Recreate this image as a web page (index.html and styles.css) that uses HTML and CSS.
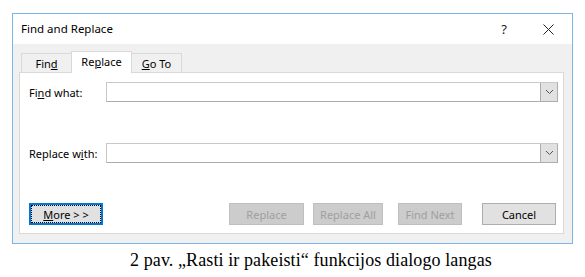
FILE: index.html
```html
<!DOCTYPE html>
<html>
<head>
    <title>Find and Replace</title>
    <link rel="stylesheet" href="styles.css">
</head>
<body>
    <div class="dialog">
        <div class="titlebar">
            <span class="title">Find and Replace</span>
            <span class="help">?</span>
            <svg class="close" width="11" height="11" viewBox="0 0 11 11">
                <path d="M0.5 0.5 L10.5 10.5 M10.5 0.5 L0.5 10.5" stroke="#222" stroke-width="1" fill="none"/>
            </svg>
        </div>

        <div class="dialog_body">
            <div class="tabs">
                <div class="tab tab_find">Fin<u>d</u></div>
                <div class="tab tab_replace active">Re<u>p</u>lace</div>
                <div class="tab tab_goto"><u>G</u>o To</div>
            </div>

            <div class="panel">
                <div class="row">
                    <label class="field_label">Fi<u>n</u>d what:</label>
                    <div class="combo">
                        <div class="combo_text"></div>
                        <div class="combo_button">
                            <svg width="9" height="6" viewBox="0 0 9 6">
                                <path d="M1 1 L4.5 4.5 L8 1" stroke="#555" stroke-width="1" fill="none"/>
                            </svg>
                        </div>
                    </div>
                </div>

                <div class="row row_replace">
                    <label class="field_label">Replace w<u>i</u>th:</label>
                    <div class="combo">
                        <div class="combo_text"></div>
                        <div class="combo_button">
                            <svg width="9" height="6" viewBox="0 0 9 6">
                                <path d="M1 1 L4.5 4.5 L8 1" stroke="#555" stroke-width="1" fill="none"/>
                            </svg>
                        </div>
                    </div>
                </div>

                <div class="buttons">
                    <div class="btn btn_more"><span class="focus_ring"><u>M</u>ore &gt; &gt;</span></div>
                    <div class="spacer"></div>
                    <div class="btn disabled btn_replace">Replace</div>
                    <div class="btn disabled btn_replace_all">Replace All</div>
                    <div class="btn disabled btn_find_next">Find Next</div>
                    <div class="btn btn_cancel">Cancel</div>
                </div>
            </div>
        </div>
    </div>

    <p class="caption">2 pav. „Rasti ir pakeisti“ funkcijos dialogo langas</p>
</body>
</html>
```

FILE: styles.css
```css
body {
    margin: 0;
    padding: 0;
    background-color: #fff;
    font-family: 'Noto Sans', 'Open Sans', sans-serif;
    font-size: 11px;
    color: #000;
}

.dialog {
    width: 559px;
    margin: 13px 0 0 12px;
    border: 1px solid #7eb4ea;
    background-color: #f0f0f0;
}

.titlebar {
    height: 30px;
    background-color: #fff;
    display: flex;
    align-items: center;
    padding-left: 8px;
}

.title {
    font-size: 11.5px;
    flex: 1;
    margin-top: -1px;
}

.help {
    font-size: 13px;
    color: #222;
    width: 40px;
    margin-right: 19px;
    text-align: center;
}

.close {
    margin-right: 18px;
}

.dialog_body {
    padding: 7px 8px 9px 6px;
}

.tabs {
    display: flex;
    align-items: flex-end;
    padding-left: 2px;
    height: 21px;
}

.tab {
    height: 18px;
    border: 1px solid #d9d9d9;
    border-bottom: none;
    background-color: #f0f0f0;
    text-align: center;
    line-height: 19px;
    box-sizing: content-box;
}

.tab_find {
    width: 49px;
}

.tab_replace {
    width: 59px;
    margin-left: -1px;
}

.tab_goto {
    width: 49px;
    margin-left: -1px;
}

.tab.active {
    height: 21px;
    line-height: 20px;
    background-color: #fff;
    margin-bottom: -1px;
    position: relative;
    z-index: 1;
}

.panel {
    height: 151px;
    border: 1px solid #d9d9d9;
    background-color: #fff;
    padding: 9px 5px 0 9px;
    box-sizing: content-box;
}

.row {
    display: flex;
    align-items: center;
    height: 20px;
}

.row_replace {
    margin-top: 41px;
}

.field_label {
    width: 77px;
}

.combo {
    flex: 1;
    height: 18px;
    display: flex;
    border: 1px solid #adadad;
    border-top-color: #c8c8c8;
    border-left-color: #c8c8c8;
    background-color: #fff;
}

.combo_text {
    flex: 1;
}

.combo_button {
    width: 16px;
    background-color: #e1e1e1;
    border-left: 1px solid #adadad;
    display: flex;
    align-items: center;
    justify-content: center;
}

.buttons {
    display: flex;
    margin-top: 40px;
    height: 22px;
    margin-right: 2px;
}

.spacer {
    flex: 1;
}

.btn {
    height: 20px;
    border: 1px solid #adadad;
    background-color: #e1e1e1;
    display: flex;
    align-items: center;
    justify-content: center;
    box-sizing: content-box;
}

.btn_more {
    width: 70px;
    height: 18px;
    border: 2px solid #0078d7;
}

.focus_ring {
    width: 68px;
    height: 16px;
    border: 1px dotted #000;
    display: flex;
    align-items: center;
    justify-content: center;
}

.btn.disabled {
    background-color: #cccccc;
    border-color: #bfbfbf;
    color: #9f9f9f;
}

.btn_replace {
    width: 73px;
}

.btn_replace_all {
    width: 68px;
    margin-left: 9px;
}

.btn_find_next {
    width: 62px;
    margin-left: 15px;
}

.btn_cancel {
    width: 72px;
    margin-left: 20px;
}

.caption {
    font-family: 'Liberation Serif', 'Times New Roman', serif;
    font-size: 18px;
    letter-spacing: 0.1px;
    margin: 6px 0 0 130px;
}
```
